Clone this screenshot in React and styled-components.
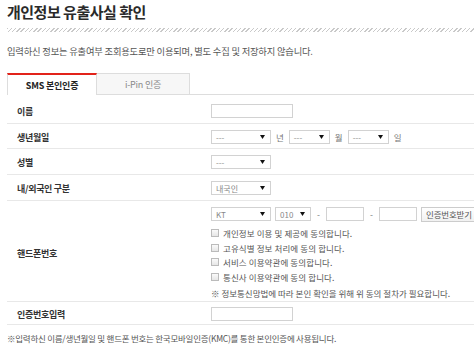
import React from "react";
import styled, { createGlobalStyle } from "styled-components";

const Global = createGlobalStyle`
  html, body { margin: 0; padding: 0; background: #fff; }
  body { font-family: "Noto Sans CJK KR", "Noto Sans", sans-serif; color: #555; }
  * { box-sizing: border-box; }
`;

const Page = styled.div`
  width: 474px;
  height: 358px;
  overflow: hidden;
  padding-left: 7px;
`;

const Title = styled.h1`
  margin: 0;
  padding-top: 3px;
  font-size: 15px;
  line-height: 18px;
  font-weight: 700;
  letter-spacing: -0.5px;
  color: #2a2a2a;
`;

const Hatch = styled.div`
  margin-top: 7px;
  height: 4px;
  background: repeating-linear-gradient(135deg, #c9c9c9 0 1px, transparent 1px 3px);
`;

const Desc = styled.p`
  margin: 12px 0 0;
  font-size: 9.3px;
  line-height: 14px;
  letter-spacing: -0.2px;
  color: #555;
`;

const TabBar = styled.div`
  margin-top: 15px;
  display: flex;
  height: 22px;
`;

const Tab = styled.div`
  width: ${(p) => p.$w}px;
  display: flex;
  align-items: center;
  justify-content: center;
  font-size: 9px;
  letter-spacing: -0.2px;
  border-left: 1px solid #ddd;
  border-right: 1px solid #ddd;
  border-top: ${(p) => (p.$active ? "2px solid #e2231a" : "1px solid #ddd")};
  border-bottom: ${(p) => (p.$active ? "none" : "1px solid #ddd")};
  background: ${(p) => (p.$active ? "#fff" : "#f7f7f7")};
  color: ${(p) => (p.$active ? "#222" : "#888")};
  font-weight: ${(p) => (p.$active ? 700 : 400)};
  & + & { border-left: none; }
`;

const TabFill = styled.div`
  flex: 1;
  border-bottom: 1px solid #ddd;
`;

const Row = styled.div`
  display: grid;
  grid-template-columns: 204px 1fr;
  align-items: center;
  padding: ${(p) => p.$pt}px 0 ${(p) => p.$pb}px;
  border-bottom: 1px solid #e8e8e8;
`;

const Label = styled.div`
  padding-left: 10px;
  font-size: 9px;
  font-weight: 700;
  letter-spacing: -0.3px;
  color: #333;
`;

const Field = styled.div`
  display: flex;
  flex-direction: column;
`;

const Line = styled.div`
  display: flex;
  align-items: center;
  height: 14px;
  gap: 4px;
`;

const Input = styled.div`
  width: ${(p) => p.$w}px;
  height: 14px;
  border: 1px solid #d2d2d2;
  background: #fff;
`;

const SelectBox = styled.div`
  width: ${(p) => p.$w}px;
  height: 14px;
  border: 1px solid #d2d2d2;
  background: #fff;
  display: flex;
  align-items: center;
  justify-content: space-between;
  padding: 0 5px 0 4px;
  font-size: 8px;
  color: #888;
`;

const Unit = styled.span`
  font-size: 8.5px;
  color: #777;
  margin: 0 ${(p) => p.$m || 0}px;
`;

const Button = styled.div`
  width: 56px;
  height: 15px;
  border: 1px solid #ccc;
  background: linear-gradient(#fff, #f1f1f1);
  display: flex;
  align-items: center;
  justify-content: center;
  font-size: 8.5px;
  color: #555;
  letter-spacing: -0.2px;
`;

const Checks = styled.div`
  margin-top: 5px;
  display: flex;
  flex-direction: column;
`;

const CheckLine = styled.label`
  display: flex;
  align-items: center;
  height: 14.5px;
  gap: 4px;
  font-size: 8.5px;
  color: #555;
  letter-spacing: 0.1px;
`;

const Box = styled.span`
  width: 8px;
  height: 8px;
  border: 1px solid #bbb;
  background: linear-gradient(#fafafa, #e6e6e6);
  flex: none;
`;

const Note = styled.div`
  margin-top: 2px;
  height: 14px;
  display: flex;
  align-items: center;
  font-size: 8.5px;
  color: #555;
`;

const Footer = styled.p`
  margin: 6px 0 0;
  font-size: 8.5px;
  line-height: 14px;
  letter-spacing: -0.25px;
  color: #555;
`;

const Arrow = () => (
  <svg width="5" height="4" viewBox="0 0 5 4">
    <path d="M0 0H5L2.5 4Z" fill="#111" />
  </svg>
);

const Select = ({ w, value = "---" }) => (
  <SelectBox $w={w}>
    <span>{value}</span>
    <Arrow />
  </SelectBox>
);

const checks = [
  "개인정보 이용 및 제공에 동의합니다.",
  "고유식별 정보 처리에 동의 합니다.",
  "서비스 이용약관에 동의합니다.",
  "통신사 이용약관에 동의 합니다.",
];

export default function App() {
  return (
    <Page>
      <Global />
      <Title>개인정보 유출사실 확인</Title>
      <Hatch />
      <Desc>입력하신 정보는 유출여부 조회용도로만 이용되며, 별도 수집 및 저장하지 않습니다.</Desc>
      <TabBar>
        <Tab $w={90} $active>SMS 본인인증</Tab>
        <Tab $w={93}>i-Pin 인증</Tab>
        <TabFill />
      </TabBar>

      <Row $pt={9} $pb={5}>
        <Label>이름</Label>
        <Line>
          <Input $w={82} />
        </Line>
      </Row>

      <Row $pt={6} $pb={4}>
        <Label>생년월일</Label>
        <Line>
          <Select w={60} />
          <Unit $m={1}>년</Unit>
          <Select w={41} />
          <Unit $m={1}>월</Unit>
          <Select w={41} />
          <Unit $m={1}>일</Unit>
        </Line>
      </Row>

      <Row $pt={6} $pb={5}>
        <Label>성별</Label>
        <Line>
          <Select w={60} />
        </Line>
      </Row>

      <Row $pt={6} $pb={5}>
        <Label>내/외국인 구분</Label>
        <Line>
          <Select w={60} value="내국인" />
        </Line>
      </Row>

      <Row $pt={6} $pb={1}>
        <Label>핸드폰번호</Label>
        <Field>
          <Line>
            <Select w={60} value="KT" />
            <Select w={36} value="010" />
            <Unit $m={2}>-</Unit>
            <Input $w={38} />
            <Unit $m={2}>-</Unit>
            <Input $w={38} />
            <Button>인증번호받기</Button>
          </Line>
          <Checks>
            {checks.map((c) => (
              <CheckLine key={c}>
                <Box />
                {c}
              </CheckLine>
            ))}
          </Checks>
          <Note>※ 정보통신망법에 따라 본인 확인을 위해 위 동의 절차가 필요합니다.</Note>
        </Field>
      </Row>

      <Row $pt={5} $pb={3}>
        <Label>인증번호입력</Label>
        <Line>
          <Input $w={82} />
        </Line>
      </Row>

      <Footer>※입력하신 이름/생년월일 및 핸드폰 번호는 한국모바일인증(KMC)를 통한 본인인증에 사용됩니다.</Footer>
    </Page>
  );
}
